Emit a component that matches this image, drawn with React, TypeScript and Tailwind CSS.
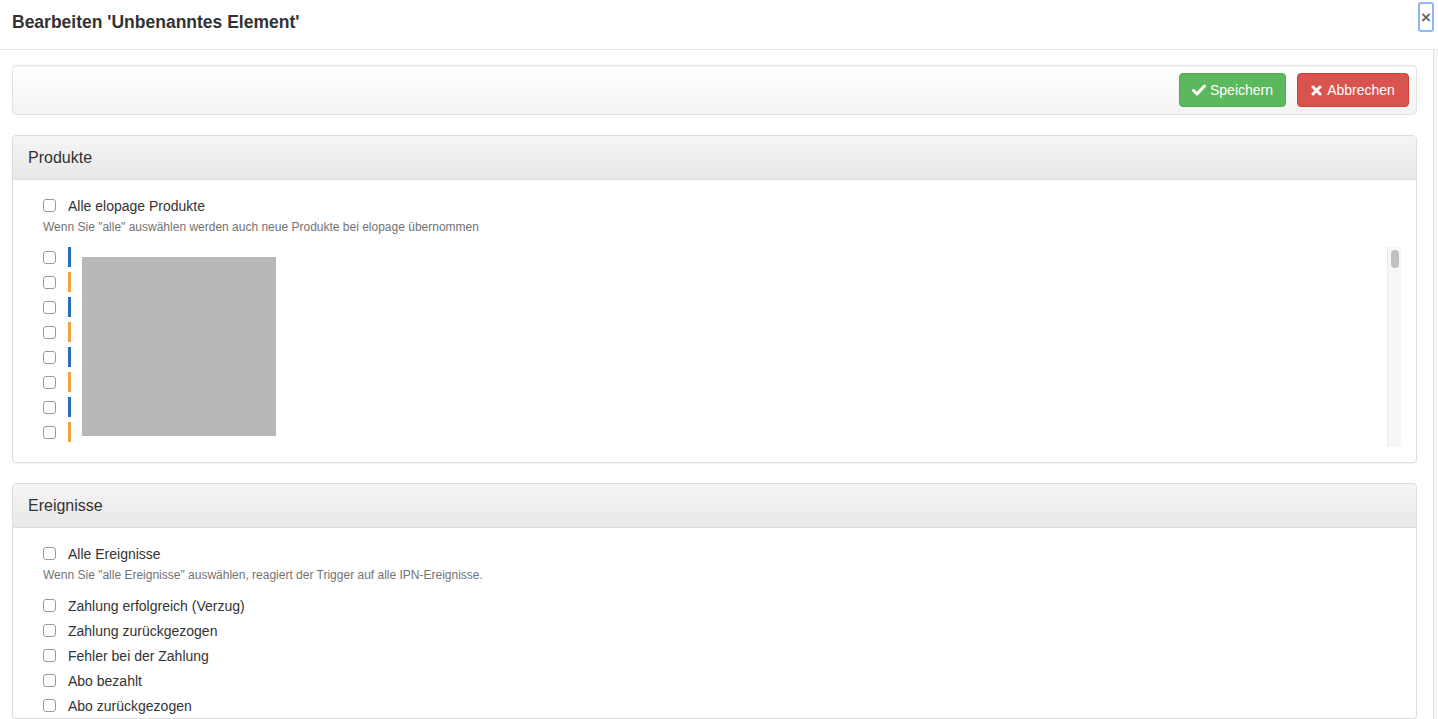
import React from "react";

const Box = () => (
  <span className="inline-block w-[13px] h-[13px] rounded-[3px] border border-[#9a9a9a] bg-white shrink-0" />
);

function CheckRow({ label }: { label: string }) {
  return (
    <div className="flex items-center h-[25px]">
      <span className="w-[25px] flex"><Box /></span>
      <span className="text-[14px] text-[#333] leading-[20px]">{label}</span>
    </div>
  );
}

function Panel({ title, children }: { title: string; children: React.ReactNode }) {
  return (
    <div className="border border-[#dddddd] rounded-[4px] bg-white shadow-[0_1px_1px_rgba(0,0,0,0.05)]">
      <div className="h-[44px] flex items-center px-[15px] bg-gradient-to-b from-[#f5f5f5] to-[#e8e8e8] border-b border-[#dddddd] rounded-t-[4px]">
        <span className="text-[16px] text-[#333]">{title}</span>
      </div>
      <div className="pl-[30px] pr-[15px]">{children}</div>
    </div>
  );
}

export default function App() {
  const colors = ["#2a6eb5", "#f0a33f", "#2a6eb5", "#f0a33f", "#2a6eb5", "#f0a33f", "#2a6eb5", "#f0a33f"];
  const events = [
    "Zahlung erfolgreich (Verzug)",
    "Zahlung zurückgezogen",
    "Fehler bei der Zahlung",
    "Abo bezahlt",
    "Abo zurückgezogen",
  ];
  return (
    <div className="w-[1438px] h-[719px] overflow-hidden bg-white flex flex-col" style={{ fontFamily: '"Liberation Sans", Arial, sans-serif' }}>
      <div className="h-[50px] shrink-0 border-b border-[#e5e5e5] flex items-start justify-between">
        <h4 className="text-[17.5px] font-bold text-[#333] mt-[12px] ml-[12px] leading-[20px]">Bearbeiten 'Unbenanntes Element'</h4>
        <button className="mt-[2px] mr-[4px] w-[16px] h-[30px] rounded-[3px] border-2 border-[#8fb5f7] flex items-center justify-center text-[#6a6a6a] text-[17px] font-bold leading-none">×</button>
      </div>
      <div className="flex flex-1 min-h-0">
        <div className="flex-1 pl-[12px] pr-[16px] pt-[15px] flex flex-col gap-[20px]">
          <div className="h-[50px] border border-[#e3e3e3] rounded-[4px] bg-gradient-to-b from-[#ffffff] to-[#f3f3f3] shadow-[inset_0_1px_1px_rgba(0,0,0,0.04)] flex items-center justify-end gap-[11px] pr-[7px]">
            <button className="h-[34px] w-[107px] rounded-[4px] bg-[#5cb85c] border border-[#4cae4c] text-white text-[14px] flex items-center justify-center gap-[4px]">
              <svg width="14" height="12" viewBox="0 0 14 12"><path d="M1.5 6.5 L5 10 L12.5 2" stroke="white" strokeWidth="3" fill="none" strokeLinecap="round" strokeLinejoin="round" /></svg>
              Speichern
            </button>
            <button className="h-[34px] w-[112px] rounded-[4px] bg-[#d9534f] border border-[#d43f3a] text-white text-[14px] flex items-center justify-center gap-[5px]">
              <svg width="11" height="11" viewBox="0 0 11 11"><path d="M2 2 L9 9 M9 2 L2 9" stroke="white" strokeWidth="3" strokeLinecap="round" /></svg>
              Abbrechen
            </button>
          </div>
          <Panel title="Produkte">
            <div className="pt-[13px]">
              <CheckRow label="Alle elopage Produkte" />
              <div className="text-[12px] text-[#737373] leading-[16px] mt-[1px]">Wenn Sie "alle" auswählen werden auch neue Produkte bei elopage übernommen</div>
              <div className="mt-[12px] mb-[15px] h-[200px] flex relative">
                <div className="flex-1 flex flex-col">
                  {colors.map((c, i) => (
                    <div key={i} className="flex items-start h-[25px]">
                      <span className="w-[25px] mt-[4px] flex"><Box /></span>
                      <span className="w-[3px] h-[20px]" style={{ background: c }} />
                    </div>
                  ))}
                </div>
                <div className="absolute left-[39px] top-[10px] w-[194px] h-[179px] bg-[#b8b8b8]" />
                <div className="w-[14px] h-[200px] bg-[#f7f7f7] border-l border-[#e8e8e8] flex justify-center">
                  <div className="w-[8px] h-[18px] rounded-full bg-[#c1c1c1] mt-[3px]" />
                </div>
              </div>
            </div>
          </Panel>
          <Panel title="Ereignisse">
            <div className="pt-[13px]">
              <CheckRow label="Alle Ereignisse" />
              <div className="text-[12px] text-[#737373] leading-[16px] mt-[1px] mb-[10px]">Wenn Sie "alle Ereignisse" auswählen, reagiert der Trigger auf alle IPN-Ereignisse.</div>
              {events.map((e) => (
                <CheckRow key={e} label={e} />
              ))}
            </div>
          </Panel>
        </div>
        <div className="w-[5px] bg-[#f7f7f7] border-l border-[#e0e0e0]" />
      </div>
    </div>
  );
}
